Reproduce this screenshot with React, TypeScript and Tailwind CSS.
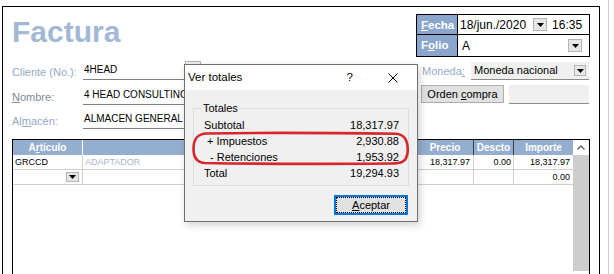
import React from "react";

const Dd = ({ className = "" }: { className?: string }) => (
  <div className={`flex items-center justify-center bg-[#e6e6e6] border border-[#b5b5b5] ${className}`}>
    <svg width="7" height="4" viewBox="0 0 7 4">
      <path d="M0 0h7L3.5 4z" fill="#000" />
    </svg>
  </div>
);

export default function App() {
  return (
    <div className="relative w-[614px] h-[274px] overflow-hidden bg-white font-['Liberation_Sans',Arial,sans-serif] text-black flex">
      <div className="ml-[2px] mt-[6px] w-[598px] h-[280px] shrink-0 border-l border-t border-r border-black flex flex-col px-[9px]">
        <div className="h-[132px] flex">
          {/* left */}
          <div className="flex-1 flex flex-col">
            <div className="mt-[10px] h-[30px] text-[30px] leading-[30px] font-bold text-[#a3b8d4]">Factura</div>
            <div className="mt-[14px] flex flex-col">
              <div className="h-[19px] flex">
                <div className="w-[71px] self-end leading-[16px] text-[11px] text-[#93a9c6]">Cliente (No.):</div>
                <div className="w-[102px] border-b border-[#808080] text-[10px] leading-[18px] pl-[1px] whitespace-nowrap overflow-hidden">4HEAD</div>
                <div className="w-[16px] h-[18px] border border-[#b0b0b0] bg-[#f0f0f0]" />
              </div>
              <div className="mt-[6px] h-[19px] flex">
                <div className="w-[71px] self-end leading-[16px] text-[11px] text-[#7d8898]"><span className="underline">N</span>ombre:</div>
                <div className="w-[130px] border-b border-[#808080] text-[10px] leading-[18px] pl-[1px] whitespace-nowrap overflow-hidden">4 HEAD CONSULTING</div>
              </div>
              <div className="mt-[5px] h-[19px] flex">
                <div className="w-[71px] self-end leading-[16px] text-[11px] text-[#93a9c6]">Al<span className="underline">m</span>acén:</div>
                <div className="w-[130px] border-b border-[#808080] text-[10px] leading-[18px] pl-[1px] whitespace-nowrap overflow-hidden">ALMACEN GENERAL</div>
              </div>
            </div>
          </div>
          {/* right */}
          <div className="w-[174px] flex flex-col">
            <div className="mt-[7px] border border-black flex flex-col">
              <div className="flex h-[20px] border-b border-black">
                <div className="w-[41px] bg-[#8aa6cc] border-r border-black text-white font-bold text-[11.5px] leading-[20px] pl-[4px]">
                  <span className="underline">F</span>echa
                </div>
                <div className="flex-1 flex items-center text-[12px] pl-[2px]">
                  <span>18/jun./2020</span>
                  <Dd className="ml-[7px] w-[14px] h-[13px]" />
                  <span className="ml-[5px]">16:35</span>
                </div>
              </div>
              <div className="flex h-[21px]">
                <div className="w-[41px] bg-[#8aa6cc] border-r border-black text-white font-bold text-[11.5px] leading-[21px] pl-[4px]">
                  F<span className="underline">o</span>lio
                </div>
                <div className="flex-1 flex items-center text-[12px] pl-[4px]">
                  <span>A</span>
                  <Dd className="ml-auto mr-[7px] w-[14px] h-[13px]" />
                </div>
              </div>
            </div>
            <div className="mt-[5px] h-[18px] flex">
              <div className="w-[55px] pl-[6px] text-[11px] leading-[18px] text-[#94abc8]">
                Moneda<span className="underline">:</span>
              </div>
              <div className="w-[118px] bg-[#f0f0f0] border-b border-[#8c8c8c] flex items-center text-[11px] pl-[3px]">
                <span>Moneda nacional</span>
                <Dd className="ml-auto mr-[3px] w-[12px] h-[11px]" />
              </div>
            </div>
            <div className="mt-[5px] h-[19px] flex">
              <div className="ml-[5px] w-[83px] h-[18px] bg-[#e1e1e1] border border-[#adadad] text-[11px] leading-[16px] text-center">
                Orden <span className="underline">c</span>ompra
              </div>
              <div className="ml-[5px] w-[80px] h-[19px] bg-[#f0f0f0] border-b border-[#8c8c8c]" />
            </div>
          </div>
        </div>
        {/* grid */}
        <div className="h-[140px] border-l border-t border-r border-black flex">
          <div className="flex-1 flex flex-col">
            <div className="h-[15px] bg-[#94aed0] flex text-white font-bold text-[10px] leading-[15px]">
              <div className="w-[70px] border-r border-white text-center">A<span className="underline">r</span>tículo</div>
              <div className="w-[334px] border-r border-[#3c3c3c]" />
              <div className="w-[57px] border-r border-[#3c3c3c] text-center">Precio</div>
              <div className="w-[40px] border-r border-[#3c3c3c] text-center">Descto</div>
              <div className="w-[59px] text-center">Importe</div>
            </div>
            <div className="h-[15px] border-b border-[#d0d0d0] flex text-[9px] leading-[14px]">
              <div className="w-[70px] border-r border-[#d0d0d0] pl-[2px]">GRCCD</div>
              <div className="w-[334px] border-r border-[#d0d0d0] pl-[2px] text-[#a4b7d0]">ADAPTADOR</div>
              <div className="w-[57px] border-r border-[#d0d0d0] text-right pr-[3px]">18,317.97</div>
              <div className="w-[40px] border-r border-[#d0d0d0] text-right pr-[2px]">0.00</div>
              <div className="w-[59px] text-right pr-[3px]">18,317.97</div>
            </div>
            <div className="h-[15px] border-b border-[#d0d0d0] flex text-[9px] leading-[14px]">
              <div className="w-[70px] border-r border-[#d0d0d0] flex items-center">
                <Dd className="ml-auto mr-[3px] w-[13px] h-[10px]" />
              </div>
              <div className="w-[334px] border-r border-[#d0d0d0]" />
              <div className="w-[57px] border-r border-[#d0d0d0]" />
              <div className="w-[40px] border-r border-[#d0d0d0]" />
              <div className="w-[59px] text-right pr-[3px]">0.00</div>
            </div>
          </div>
          <div className="w-[16px] flex flex-col">
            <div className="h-[15px] flex items-center justify-center">
              <svg width="8" height="5" viewBox="0 0 8 5">
                <path d="M0.5 4.5L4 1l3.5 3.5" fill="none" stroke="#606060" strokeWidth="1.3" />
              </svg>
            </div>
            <div className="h-[116px] bg-[#cdcdcd]" />
          </div>
        </div>
      </div>
      <div className="ml-[8px] w-px h-full bg-[#cfcfcf]" />

      {/* dialog */}
      <div className="absolute left-[184px] top-[64px] w-[234px] h-[158px] border border-[#6f6f6f] bg-[#f0f0f0] flex flex-col shadow-[2px_3px_8px_rgba(0,0,0,0.18)]">
        <div className="h-[25px] bg-white flex items-center text-[11.5px] pl-[3px]">
          <span>Ver totales</span>
          <span className="ml-auto">?</span>
          <svg className="ml-[35px] mr-[19px]" width="10" height="10" viewBox="0 0 10 10">
            <path d="M0.5 0.5L9.5 9.5M9.5 0.5L0.5 9.5" stroke="#000" strokeWidth="1" />
          </svg>
        </div>
        <div className="ml-[8px] mt-[18px] w-[216px] h-[78px] border border-[#dcdcdc] relative pt-[8px] pl-[10px] pr-[9px] text-[11px]">
          <span className="absolute left-[8px] top-[-8px] px-[1px] leading-[14px] bg-[#f0f0f0]">Totales</span>
          <div className="flex justify-between h-[16px] leading-[16px]">
            <span>Subtotal</span>
            <span>18,317.97</span>
          </div>
          <div className="flex justify-between h-[16px] leading-[16px]">
            <span className="pl-[3px]">+ Impuestos</span>
            <span>2,930.88</span>
          </div>
          <div className="flex justify-between h-[16px] leading-[16px]">
            <span className="pl-[6px]">- Retenciones</span>
            <span>1,953.92</span>
          </div>
          <div className="flex justify-between h-[16px] leading-[16px]">
            <span>Total</span>
            <span>19,294.93</span>
          </div>
        </div>
        <div className="mt-[9px] mr-[9px] flex justify-end">
          <div className="relative w-[74px] h-[20px] bg-[#e1e1e1] border-2 border-[#0078d7] text-[11px] leading-[16px] text-center">
            <span className="absolute inset-0 border border-dotted border-black" />
            <span className="underline">A</span>ceptar
          </div>
        </div>
      </div>

      {/* red annotation */}
      <svg className="absolute left-[191px] top-[131px]" width="220" height="35" viewBox="0 0 220 35">
        <path
          d="M16 2.5 C 70 1.5, 150 2, 205 2.8 C 216 3.5, 217.5 14, 216.5 22 C 215.5 31, 210 32.5, 200 32.5 C 140 33, 70 33, 14 32 C 5 31.5, 2.5 26, 2.5 18 C 2.5 8, 6 2.8, 16 2.5 Z"
          fill="none"
          stroke="#d8262c"
          strokeWidth="2.6"
        />
      </svg>
    </div>
  );
}
